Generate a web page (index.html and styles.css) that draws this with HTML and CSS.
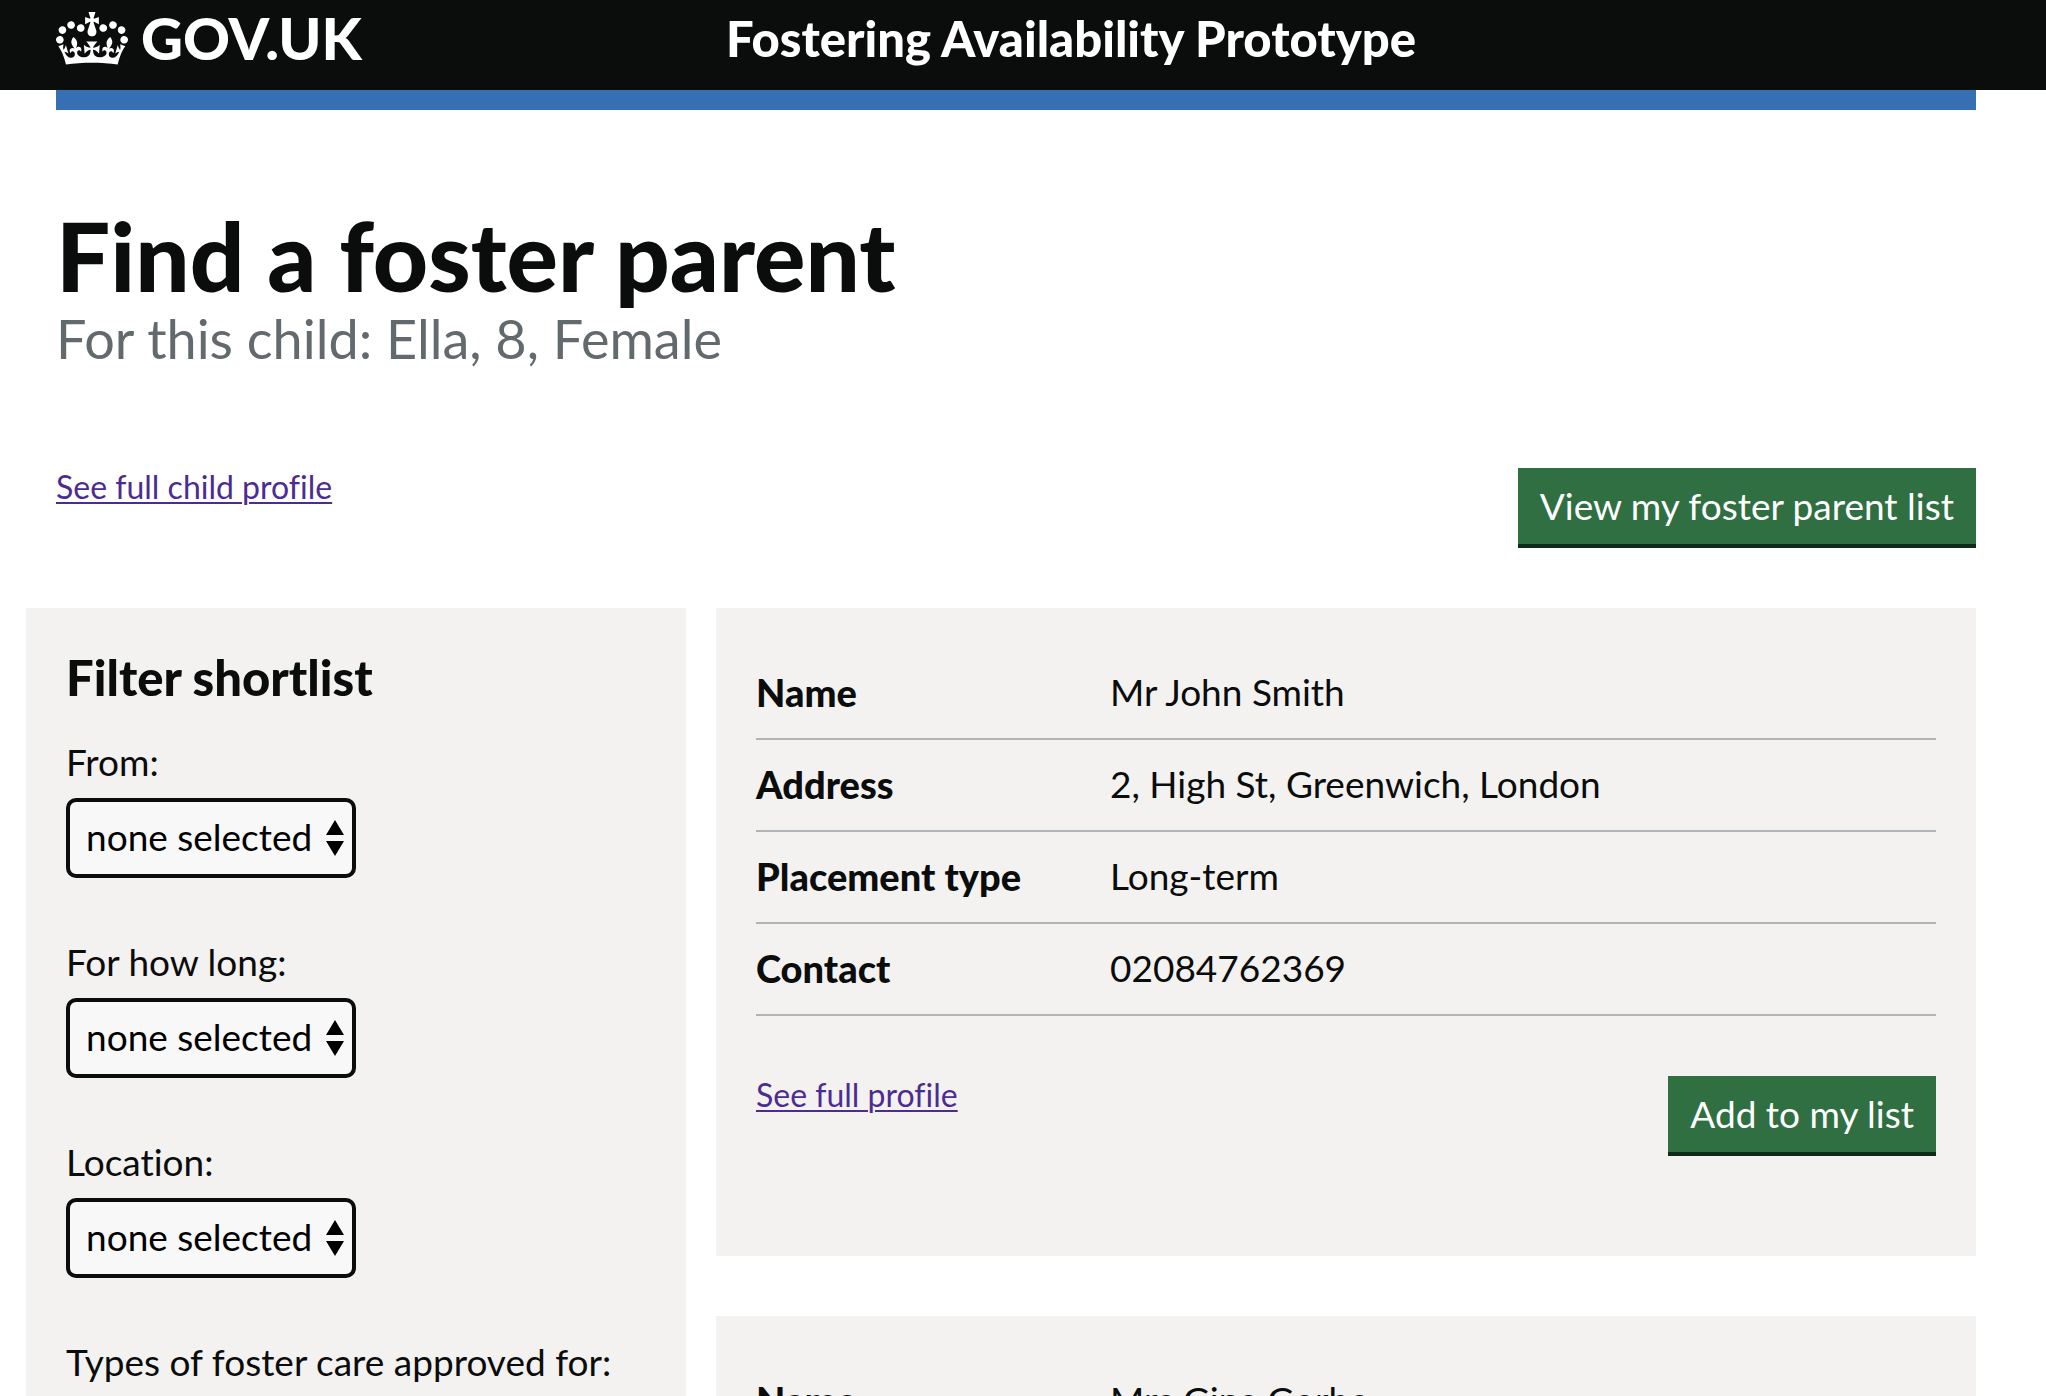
FILE: index.html
```html
<!DOCTYPE html>
<html lang="en">
<head>
  <meta charset="utf-8">
  <meta name="viewport" content="width=device-width, initial-scale=1">
  <title>Find a foster parent</title>
  <link rel="stylesheet" href="styles.css">
</head>
<body>
  <header class="header">
    <div class="header-inner">
      <a class="logo" href="#">
        <svg class="crown" viewBox="0 0 132 97" aria-hidden="true">
          <path fill="currentColor" fill-rule="evenodd" d="M25 30.2c3.5 1.5 7.7-.2 9.1-3.7 1.5-3.6-.2-7.8-3.9-9.2-3.6-1.4-7.6.3-9.1 3.9-1.4 3.5.3 7.5 3.9 9zM9 39.5c3.6 1.5 7.8-.2 9.2-3.7 1.5-3.6-.2-7.8-3.9-9.1-3.6-1.5-7.6.2-9.1 3.8-1.4 3.5.3 7.5 3.8 9zM4.4 57.2c3.5 1.5 7.7-.2 9.1-3.8 1.5-3.6-.2-7.7-3.9-9.1-3.5-1.5-7.6.3-9.1 3.8-1.4 3.5.3 7.6 3.9 9.1zm38.3-21.4c3.5 1.5 7.7-.2 9.1-3.8 1.5-3.6-.2-7.7-3.9-9.1-3.6-1.5-7.6.3-9.1 3.8-1.3 3.6.4 7.7 3.9 9.1zm64.4-5.6c-3.6 1.5-7.8-.2-9.1-3.7-1.5-3.6.2-7.8 3.8-9.2 3.6-1.4 7.7.3 9.2 3.9 1.3 3.5-.4 7.5-3.9 9zm15.9 9.3c-3.6 1.5-7.7-.2-9.1-3.7-1.5-3.6.2-7.8 3.7-9.1 3.6-1.5 7.7.2 9.2 3.8 1.5 3.5-.3 7.5-3.8 9zm4.7 17.7c-3.6 1.5-7.8-.2-9.2-3.8-1.5-3.6.2-7.7 3.9-9.1 3.6-1.5 7.7.3 9.2 3.8 1.3 3.5-.4 7.6-3.9 9.1zM89.3 35.8c-3.6 1.5-7.8-.2-9.2-3.8-1.4-3.6.2-7.7 3.9-9.1 3.6-1.5 7.7.3 9.2 3.8 1.4 3.6-.3 7.7-3.9 9.1zM69.7 17.7l8.9 4.7V9.3l-8.9 2.8c-.2-.3-.5-.6-.9-.9L72.4 0H59.6l3.5 11.2c-.3.3-.6.5-.9.9l-8.8-2.8v13.1l8.8-4.7c.3.3.6.7.9.9l-5 15.4v.1c-.2.8-.4 1.6-.4 2.4 0 4.1 3.1 7.5 7 8.1h.2c.3 0 .7.1 1 .1.4 0 .7 0 1-.1h.2c4-.6 7.1-4.1 7.1-8.1 0-.8-.1-1.7-.4-2.4V34l-5.1-15.4c.4-.2.7-.6 1-.9zM66 92.8c16.9 0 32.8 1.1 47.1 3.2 4-16.9 8.9-26.7 14-33.5l-9.6-3.4c1 4.9 1.1 7.2 0 10.2-1.5-1.4-3-4.3-4.2-8.7L108.6 76c2.8-2 5-3.2 7.5-3.3-4.4 9.4-10 11.9-13.6 11.2-4.3-.8-6.3-4.6-5.6-7.9 1-4.7 5.7-5.9 8-.5 4.3-8.7-3-11.4-7.6-8.8 7.1-7.2 7.9-13.5 2.1-21.1-8 6.1-8.1 12.3-4.5 20.8-4.7-5.4-12.1-2.5-9.5 6.2 3.4-5.2 7.9-2 7.2 3.1-.6 4.3-6.4 7.8-13.5 7.2-10.3-.9-10.9-8-11.2-13.8 2.5-.5 7.1 1.8 11 7.3L80.2 60c-4.1 4.4-8 5.3-12.3 5.4 1.4-4.4 8-11.6 8-11.6H55.5s6.4 7.2 7.9 11.6c-4.2-.1-8-1-12.3-5.4l1.4 16.4c3.9-5.5 8.5-7.7 10.9-7.3-.3 5.8-.9 12.8-11.1 13.8-7.2.6-12.9-2.9-13.5-7.2-.7-5 3.8-8.3 7.1-3.1 2.7-8.7-4.6-11.6-9.4-6.2 3.7-8.5 3.6-14.7-4.6-20.8-5.8 7.6-5 13.9 2.2 21.1-4.7-2.6-11.9.1-7.7 8.8 2.3-5.5 7.1-4.2 8.1.5.7 3.3-1.3 7.1-5.7 7.9-3.5.7-9-1.8-13.5-11.2 2.5.1 4.7 1.3 7.5 3.3l-4.7-15.4c-1.2 4.4-2.7 7.2-4.3 8.7-1.1-3-.9-5.3 0-10.2l-9.5 3.4c5 6.9 9.9 16.7 14 33.5 14.8-2.1 30.8-3.2 47.7-3.2z"/>
        </svg>
        <span class="logo-text">GOV.UK</span>
      </a>
      <a class="service-name" href="#">Fostering Availability Prototype</a>
    </div>
  </header>

  <div class="container">
    <div class="header-bar"></div>
    <main class="main">
      <h1 class="title">Find a foster parent</h1>
      <p class="caption">For this child: Ella, 8, Female</p>

      <div class="actions page-actions">
        <a class="link" href="#">See full child profile</a>
        <button class="button" type="button">View my foster parent list</button>
      </div>

      <div class="columns">
        <form class="panel filters">
          <h2 class="panel-title">Filter shortlist</h2>
          <div class="field">
            <label for="from">From:</label>
            <select class="select" id="from"><option>none selected</option></select>
          </div>
          <div class="field">
            <label for="duration">For how long:</label>
            <select class="select" id="duration"><option>none selected</option></select>
          </div>
          <div class="field">
            <label for="location">Location:</label>
            <select class="select" id="location"><option>none selected</option></select>
          </div>
          <fieldset class="field">
            <legend>Types of foster care approved for:</legend>
          </fieldset>
        </form>

        <div class="results">
          <article class="panel">
            <dl class="summary">
              <div class="summary-row"><dt>Name</dt><dd>Mr John Smith</dd></div>
              <div class="summary-row"><dt>Address</dt><dd>2, High St, Greenwich, London</dd></div>
              <div class="summary-row"><dt>Placement type</dt><dd>Long-term</dd></div>
              <div class="summary-row"><dt>Contact</dt><dd>02084762369</dd></div>
            </dl>
            <div class="actions">
              <a class="link" href="#">See full profile</a>
              <button class="button" type="button">Add to my list</button>
            </div>
          </article>
          <article class="panel">
            <dl class="summary">
              <div class="summary-row"><dt>Name</dt><dd>Mrs Gina Gorbe</dd></div>
            </dl>
          </article>
        </div>
      </div>
    </main>
  </div>
</body>
</html>
```
FILE: styles.css
```css
* {
  box-sizing: border-box;
}

body {
  margin: 0;
  background: #fff;
  color: #0b0c0c;
  font-family: Lato, "Liberation Sans", sans-serif;
  font-size: 37px;
  font-variant-ligatures: none;
  line-height: 44px;
}

h1, h2, p, dl, dd {
  margin: 0;
}

/* Header */

.header {
  background: #0b0c0c;
  padding: 0 70px 0 56px;
}

.header-inner {
  display: grid;
  grid-template-columns: 1fr 2fr;
  height: 90px;
  padding-bottom: 14px;
  align-items: center;
}

.logo,
.service-name {
  color: #fff;
  font-weight: 900;
  text-decoration: none;
}

.logo {
  display: flex;
  align-items: center;
  gap: 13px;
}

.crown {
  width: 72px;
  height: 53px;
}

.logo-text {
  font-size: 58px;
  line-height: 60px;
}

.service-name {
  padding-left: 30px;
  font-size: 49px;
  line-height: 54px;
}

/* Page */

.container {
  margin: 0 70px 0 56px;
}

.header-bar {
  height: 20px;
  background: #366fb3;
}

.main {
  padding-top: 94px;
}

.title {
  font-size: 96px;
  font-weight: 900;
  line-height: 102px;
}

.caption {
  color: #626a6e;
  font-size: 54px;
  line-height: 66px;
}

.actions {
  display: flex;
  justify-content: space-between;
  align-items: flex-start;
  margin-bottom: 60px;
}

.page-actions {
  margin-top: 96px;
}

.link {
  color: #4c2c92;
  font-size: 32px;
  line-height: 38px;
  text-underline-offset: 3px;
  text-decoration-thickness: 2px;
}

.button {
  margin: 0 0 4px;
  padding: 16px 22px;
  border: 0;
  background: #2f6f42;
  box-shadow: 0 4px 0 #0e2b1a;
  color: #fff;
  font: inherit;
}

.columns {
  display: grid;
  grid-template-columns: 22fr 42fr;
  gap: 30px;
  margin-left: -30px;
}

.panel {
  padding: 40px;
  background: #f3f2f1;
}

/* Filters */

.filters {
  display: flex;
  flex-direction: column;
}

.panel-title {
  margin-bottom: 34px;
  font-size: 49px;
  font-weight: 900;
  line-height: 58px;
}

.field {
  display: flex;
  flex-direction: column;
  align-items: flex-start;
  gap: 14px;
  margin: 0 0 62px;
  padding: 0;
  border: 0;
}

legend {
  padding: 0;
}

.select {
  width: 290px;
  height: 80px;
  padding: 0 0 2px 16px;
  border: 4px solid #0b0c0c;
  border-radius: 10px;
  appearance: none;
  background: #f8f8f8 url("data:image/svg+xml,%3Csvg xmlns='http://www.w3.org/2000/svg' width='18' height='36' viewBox='0 0 18 36'%3E%3Cpath d='M9 0l9 15H0zM9 36l9-15H0z'/%3E%3C/svg%3E") no-repeat right 8px center;
  color: #000;
  font: inherit;
}

/* Results */

.results {
  display: flex;
  flex-direction: column;
  gap: 60px;
}

.summary {
  margin-bottom: 60px;
}

.summary-row {
  display: grid;
  grid-template-columns: 3fr 7fr;
  padding: 19px 0 21px;
  border-bottom: 2px solid #b1b4b6;
  line-height: 50px;
}

.summary-row dt {
  font-size: 38px;
  font-weight: 900;
}
```
